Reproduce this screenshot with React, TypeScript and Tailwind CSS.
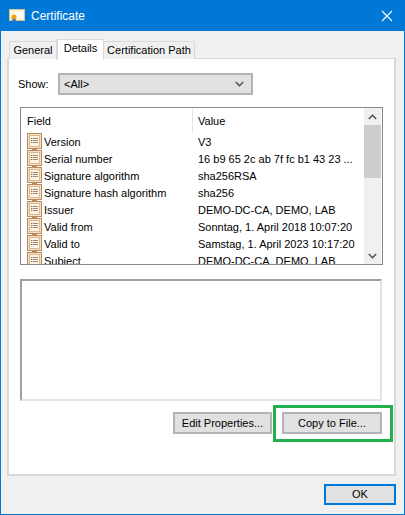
const fields = [
  ['Version', 'V3'],
  ['Serial number', '16 b9 65 2c ab 7f fc b1 43 23 ...'],
  ['Signature algorithm', 'sha256RSA'],
  ['Signature hash algorithm', 'sha256'],
  ['Issuer', 'DEMO-DC-CA, DEMO, LAB'],
  ['Valid from', 'Sonntag, 1. April 2018 10:07:20'],
  ['Valid to', 'Samstag, 1. April 2023 10:17:20'],
  ['Subject', 'DEMO-DC-CA, DEMO, LAB'],
]

function CertIcon() {
  return (
    <svg width="16" height="14" viewBox="0 0 16 14" className="shrink-0">
      <rect x="0.5" y="0.5" width="15" height="11" fill="#fdf3d8" stroke="#d8c48c" />
      <rect x="6" y="3" width="8" height="6" fill="#ffffff" />
      <circle cx="5" cy="8" r="2.6" fill="#e8a317" />
      <path d="M3.5 10 L3 13.5 L5 12 L7 13.5 L6.5 10 Z" fill="#3b6fc4" />
    </svg>
  )
}

function FieldIcon() {
  return (
    <svg width="15" height="17" viewBox="0 0 15 17" className="shrink-0">
      <rect x="0.5" y="0.5" width="14" height="15" fill="#f6dfc4" stroke="#b98a5e" />
      <rect x="2.5" y="2.5" width="10" height="11" fill="#fbf3e8" stroke="#dcb893" />
      <path d="M5.5 5.5H11M5.5 7.5H11M5.5 9.5H11" stroke="#a08a76" strokeWidth="1" />
      <path d="M4 5.5H5M4 7.5H5M4 9.5H5" stroke="#8a6a4e" strokeWidth="1" />
      <rect x="5" y="15.5" width="5" height="1.5" fill="#b98a5e" />
    </svg>
  )
}

function Chevron({ up = false, color = '#505050' }: { up?: boolean; color?: string }) {
  return (
    <svg width="9" height="6" viewBox="0 0 9 6">
      <path d={up ? 'M0.8 5 L4.5 1.3 L8.2 5' : 'M0.8 1 L4.5 4.7 L8.2 1'} fill="none" stroke={color} strokeWidth="1.5" />
    </svg>
  )
}

export default function App() {
  return (
    <div className="w-[405px] h-[515px] flex flex-col border border-[#0078d7] bg-[#f0f0f0] text-[11px] text-black font-['Liberation_Sans',sans-serif] overflow-hidden">
      {/* title bar */}
      <div className="h-[30px] shrink-0 flex items-center bg-[#0078d7] pl-[8px] pr-[11px] text-white">
        <CertIcon />
        <span className="ml-[6px] text-[12px]">Certificate</span>
        <svg width="12" height="12" viewBox="0 0 12 12" className="ml-auto mb-[1px]">
          <path d="M1 1L11 11M11 1L1 11" stroke="#ffffff" strokeWidth="1.1" />
        </svg>
      </div>

      <div className="flex-1 flex flex-col pl-[6px] pr-[8px] pt-[7px]">
        {/* tabs */}
        <div className="h-[21px] flex items-end pl-[2px] relative z-10">
          <div className="h-[18px] w-[48px] flex items-center justify-center border border-b-0 border-[#d9d9d9] bg-[#f0f0f0]">General</div>
          <div className="h-[21px] w-[47px] -mb-[1px] pb-[3px] flex items-center justify-center border border-b-0 border-[#d9d9d9] bg-white">Details</div>
          <div className="h-[18px] w-[91px] flex items-center justify-center whitespace-nowrap border border-b-0 border-l-0 border-[#d9d9d9] bg-[#f0f0f0]">Certification Path</div>
        </div>

        {/* panel */}
        <div className="h-[418px] -mt-[1px] border-2 border-t border-[#d9d9d9] bg-white pt-[14px] pl-[11px] pr-[11px]">
          <div className="flex items-center h-[22px] -ml-[2px]">
            <span className="w-[40px]">Show:</span>
            <div className="w-[195px] h-[22px] flex items-center justify-between pl-[4px] pr-[7px] border-2 border-[#b4b4b4] bg-[#e1e1e1]">
              <span>&lt;All&gt;</span>
              <Chevron />
            </div>
          </div>

          {/* field list */}
          <div className="mt-[12px] h-[158px] flex border border-[#828790] bg-white">
            <div className="flex-1 min-w-0 overflow-hidden">
              <div className="h-[25px] pt-[1px] flex items-center">
                <span className="w-[171px] pl-[6px]">Field</span>
                <span className="h-full flex items-center border-l border-[#e5e5e5] pl-[5px]">Value</span>
              </div>
              {fields.map(([name, value]) => (
                <div key={name} className="h-[17px] flex items-center whitespace-nowrap">
                  <div className="w-[177px] shrink-0 flex items-center pl-[6px]">
                    <FieldIcon />
                    <span className="ml-[2px] pt-[1px]">{name}</span>
                  </div>
                  <span className="pt-[1px]">{value}</span>
                </div>
              ))}
            </div>
            <div className="w-[17px] mr-[1px] shrink-0 flex flex-col bg-[#f0f0f0]">
              <div className="h-[17px] flex items-center justify-center"><Chevron up /></div>
              <div className="h-[53px] bg-[#cdcdcd]" />
              <div className="flex-1" />
              <div className="h-[17px] flex items-center justify-center"><Chevron /></div>
            </div>
          </div>

          {/* value box */}
          <div className="mt-[14px] h-[122px] mr-[1px] border-2 border-[#a0a0a0] border-r-[#e3e3e3] border-b-[#e3e3e3] bg-white" />

          {/* actions */}
          <div className="mt-[11px] mr-[1px] flex justify-end">
            <button className="w-[99px] h-[22px] whitespace-nowrap border-2 border-[#b4b4b4] bg-[#e1e1e1]">Edit Properties...</button>
            <div className="relative ml-[10px]">
              <button className="block w-[100px] h-[22px] border-2 border-[#b4b4b4] bg-[#e1e1e1]">Copy to File...</button>
              <div className="absolute -left-[9px] -top-[7px] w-[120px] h-[37px] border-[3px] border-[#22b14c]" />
            </div>
          </div>
        </div>

        {/* footer */}
        <div className="flex justify-end pt-[8px]">
          <button className="w-[72px] h-[21px] border-2 border-[#0078d7] bg-[#e1e1e1]">OK</button>
        </div>
      </div>
    </div>
  )
}
